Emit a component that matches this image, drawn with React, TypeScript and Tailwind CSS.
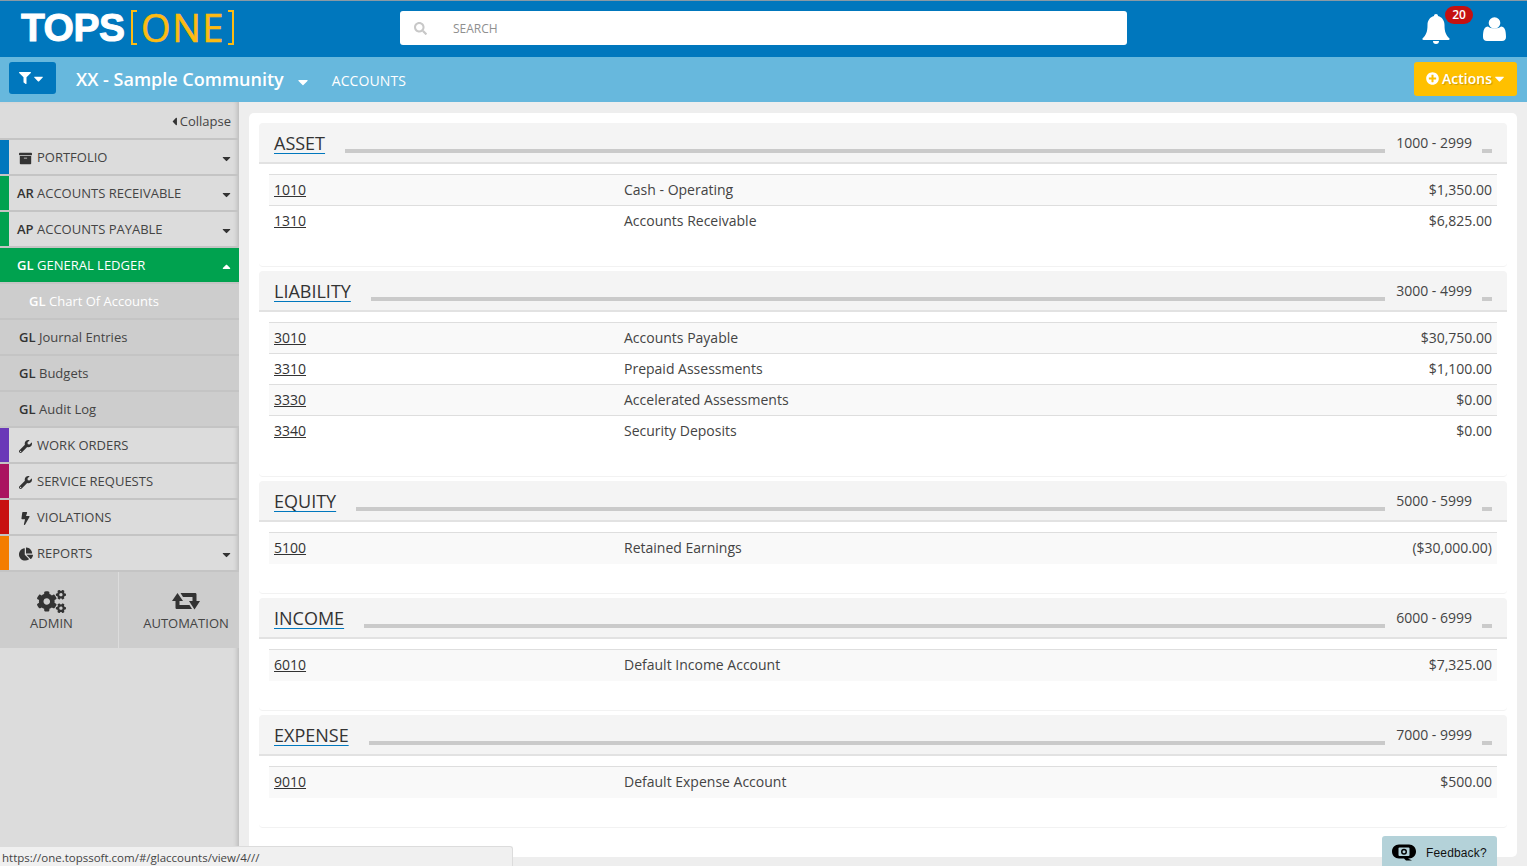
import { FaArchive, FaBolt, FaCaretDown, FaCaretLeft, FaCaretUp, FaChartPie, FaCogs, FaFilter, FaPlusCircle, FaSearch, FaWrench } from "react-icons/fa";

const SECTIONS = [
  {
    title: "ASSET",
    range: "1000 - 2999",
    rows: [
      ["1010", "Cash - Operating", "$1,350.00"],
      ["1310", "Accounts Receivable", "$6,825.00"],
    ],
  },
  {
    title: "LIABILITY",
    range: "3000 - 4999",
    rows: [
      ["3010", "Accounts Payable", "$30,750.00"],
      ["3310", "Prepaid Assessments", "$1,100.00"],
      ["3330", "Accelerated Assessments", "$0.00"],
      ["3340", "Security Deposits", "$0.00"],
    ],
  },
  {
    title: "EQUITY",
    range: "5000 - 5999",
    rows: [["5100", "Retained Earnings", "($30,000.00)"]],
  },
  {
    title: "INCOME",
    range: "6000 - 6999",
    rows: [["6010", "Default Income Account", "$7,325.00"]],
  },
  {
    title: "EXPENSE",
    range: "7000 - 9999",
    rows: [["9010", "Default Expense Account", "$500.00"]],
  },
];

function Logo() {
  return (
    <div className="flex items-center -mt-[3px]">
      <span className="font-['Liberation_Sans'] font-bold text-[39px] leading-[35px] tracking-[-0.5px] text-white [-webkit-text-stroke:1px_white]">
        TOPS
      </span>
      <div className="ml-[7px] h-[35px] w-[103px] flex items-center justify-between text-[#fdbb11]">
        <span className="w-[6px] h-full border-2 border-r-0 border-[#fdbb11]" />
        <span className="font-['Open_Sans'] text-[38px] leading-[35px] tracking-[1.5px] [-webkit-text-stroke:0.6px_#fdbb11]">ONE</span>
        <span className="w-[6px] h-full border-2 border-l-0 border-[#fdbb11]" />
      </div>
    </div>
  );
}

function BellIcon() {
  return (
    <svg width="28" height="30" viewBox="0 0 28 30" fill="#fff">
      <path d="M14 0c1.3 0 2 .9 2 2 4 1 6.5 4.5 6.5 9 0 7 1.5 10 5 13.5.3.5 0 1.5-1 1.5H1.500c-1 0-1.300-1-1-1.500C4 21 5.500 18 5.500 11 5.500 6.500 8 3 12 2c0-1.100.7-2 2-2z" />
      <path d="M11 27h6a3 3 0 0 1-6 0z" />
    </svg>
  );
}

function UserIcon() {
  return (
    <svg width="23" height="24" viewBox="0 0 23 24" fill="#fff">
      <circle cx="11.500" cy="6" r="5.800" />
      <path d="M0 20c0-7 1.500-10.500 5-10.500 2 2.500 11 2.500 13 0 3.500 0 5 3.500 5 10.500 0 2.500-1.500 4-4 4H4c-2.500 0-4-1.500-4-4z" />
    </svg>
  );
}

function RetweetIcon() {
  return (
    <svg width="28" height="18" viewBox="0 0 28 18" fill="#333">
      <path d="M0 9l5.500-8L11 9H7.500v4h10l2.500 4H5c-1 0-1.500-.5-1.500-1.500V9z" />
      <path d="M8.500 1H23c1 0 1.500.5 1.500 1.500V9H28l-5.500 8.500L17 9h3.500V5H11z" />
    </svg>
  );
}

function Header() {
  return (
    <header className="h-[57px] bg-[#0077bd] border-t border-[#8a9aa5] flex items-center relative">
      <div className="w-[400px] pl-[21px]">
        <Logo />
      </div>
      <div className="w-[727px] h-[34px] -mt-[3px] pt-[2px] bg-white rounded-[3px] flex items-center pl-[14px]">
        <FaSearch className="text-[#c8c8c8] text-[13px]" />
        <span className="ml-[26px] text-[12px] text-[#8f8f8f]">SEARCH</span>
      </div>
      <div className="ml-auto pr-[21px] flex items-center gap-[33px]">
        <BellIcon />
        <UserIcon />
      </div>
      <span className="absolute left-[1445px] top-[5px] w-[28px] h-[18px] rounded-full bg-[#c51111] text-white text-[12px] font-semibold leading-[18px] text-center">
        20
      </span>
    </header>
  );
}

function SubBar() {
  return (
    <div className="h-[45px] bg-[#67b8dd] flex items-center pl-[9px] pr-[10px] text-white">
      <button className="w-[47px] h-[32px] -mt-[3px] bg-[#0077bd] rounded-[3px] flex items-center justify-center text-white">
        <FaFilter className="text-[12px]" />
        <FaCaretDown className="text-[15px]" />
      </button>
      <span className="ml-[20px] text-[18px] font-semibold">XX - Sample Community</span>
      <FaCaretDown className="ml-[11px] mt-[4px] text-[16px]" />
      <span className="ml-[21px] mt-[2px] text-[14px] tracking-[0.1px]">ACCOUNTS</span>
      <button className="ml-auto w-[103px] h-[34px] -mt-[1px] pb-[2px] pl-[1px] bg-[#ffc000] rounded-[3px] flex items-center justify-center text-[14px] font-semibold text-white [text-shadow:1px_1px_1px_rgba(0,0,0,0.2)]">
        <FaPlusCircle className="text-[13px] mr-[3px] ml-[1px]" />
        Actions
        <FaCaretDown className="text-[15px]" />
      </button>
    </div>
  );
}

function NavItem({ stripe, icon, label, caret }: { stripe: string; icon: React.ReactNode; label: string; caret?: boolean }) {
  return (
    <div className="h-[36px] border-b-2 border-[#c4c4c4] flex items-center text-[13px] text-[#444]">
      <span className={`w-[9px] h-[34px] ${stripe}`} />
      <div className="flex-1 flex items-center mt-[2px]">
        <span className="w-[28px] flex justify-center pl-[5px] text-[#333] shrink-0">{icon}</span>
        <span>{label}</span>
        {caret && <FaCaretDown className="ml-auto mr-[6px] text-[13px] text-[#333]" />}
      </div>
    </div>
  );
}

function PrefixItem({ stripe, prefix, label }: { stripe: string; prefix: string; label: string }) {
  return (
    <div className="h-[36px] border-b-2 border-[#c4c4c4] flex items-center text-[13px] text-[#444]">
      <span className={`w-[9px] h-[34px] ${stripe}`} />
      <div className="flex-1 flex items-center mt-[2px]">
        <span className="ml-[8px] font-semibold text-[#333] w-[20px]">{prefix}</span>
        <span>{label}</span>
        <FaCaretDown className="ml-auto mr-[6px] text-[13px] text-[#333]" />
      </div>
    </div>
  );
}

function SubItem({ label, active }: { label: string; active?: boolean }) {
  return (
    <div className={`h-[36px] pt-[2px] border-b-2 border-[#c4c4c4] bg-[#cdcdcd] flex items-center text-[13px] ${active ? "pl-[29px] text-white" : "pl-[19px] text-[#444]"}`}>
      <span className={`font-semibold w-[20px] ${active ? "text-white" : "text-[#333]"}`}>GL</span>
      <span>{label}</span>
    </div>
  );
}

function Sidebar() {
  return (
    <aside className="w-[239px] shrink-0 bg-[#dcdcdc] shadow-[inset_-4px_0_4px_-2px_rgba(0,0,0,0.15)] flex flex-col">
      <div className="h-[38px] border-b-2 border-[#c4c4c4] flex items-center justify-end pr-[8px] pt-[3px] text-[13px] text-[#444]">
        <FaCaretLeft className="text-[13px] text-[#333] -mr-[1px]" />
        Collapse
      </div>
      <NavItem stripe="bg-[#0077bd]" icon={<FaArchive className="text-[13px]" />} label="PORTFOLIO" caret />
      <PrefixItem stripe="bg-[#00a24f]" prefix="AR" label="ACCOUNTS RECEIVABLE" />
      <PrefixItem stripe="bg-[#00a24f]" prefix="AP" label="ACCOUNTS PAYABLE" />
      <div className="h-[36px] pt-[2px] border-b-2 border-[#c4c4c4] bg-[#00a24f] flex items-center pl-[17px] text-[13px] text-white font-medium">
        <span className="font-semibold w-[20px]">GL</span>
        <span>GENERAL LEDGER</span>
        <FaCaretUp className="ml-auto mr-[6px] text-[13px]" />
      </div>
      <SubItem label="Chart Of Accounts" active />
      <SubItem label="Journal Entries" />
      <SubItem label="Budgets" />
      <SubItem label="Audit Log" />
      <NavItem stripe="bg-[#6a38b8]" icon={<FaWrench className="text-[13px]" />} label="WORK ORDERS" />
      <NavItem stripe="bg-[#aa1460]" icon={<FaWrench className="text-[13px]" />} label="SERVICE REQUESTS" />
      <NavItem stripe="bg-[#c81010]" icon={<FaBolt className="text-[13px]" />} label="VIOLATIONS" />
      <NavItem stripe="bg-[#f47d00]" icon={<FaChartPie className="text-[14px]" />} label="REPORTS" caret />
      <div className="flex h-[76px] bg-[#cdcdcd] text-[13px] text-[#444]">
        <div className="w-[119px] border-r border-[#dcdcdc] flex flex-col items-center pt-[15px] pr-[15px]">
          <FaCogs className="text-[29px] text-[#333]" />
          <span className="-mt-[2px]">ADMIN</span>
        </div>
        <div className="flex-1 flex flex-col items-center pt-[20px] pl-[14px]">
          <RetweetIcon />
          <span className="mt-[4px]">AUTOMATION</span>
        </div>
      </div>
    </aside>
  );
}

function Section({ title, range, rows }: { title: string; range: string; rows: string[][] }) {
  return (
    <section className="mb-[4px] pb-[29px] border-b border-[#f2f2f2] rounded-[4px]">
      <div className="h-[41px] pt-[2px] bg-[#f4f4f4] border-b-2 border-[#e2e2e2] rounded-t-[4px] flex items-center px-[15px]">
        <a className="text-[18px] text-[#333] underline decoration-[#0077bd] underline-offset-[3px]">{title}</a>
        <span className="flex-1 h-[4px] mt-[15px] ml-[20px] bg-[#cacaca]" />
        <span className="ml-[11px] -mt-[2px] text-[14px] text-[#444]">{range}</span>
        <span className="w-[10px] h-[4px] mt-[15px] ml-[10px] bg-[#cacaca]" />
      </div>
      <div className="mx-[10px] mt-[10px] border-t border-[#dedede]">
        {rows.map((row, i) => (
          <div
            key={row[0]}
            className={`h-[31px] pb-[2px] flex items-center px-[5px] text-[14px] text-[#444] ${i % 2 === 0 ? "bg-[#f9f9f9]" : "bg-white"} ${i < rows.length - 1 ? "border-b border-[#dedede]" : ""}`}
          >
            <a className="w-[350px] underline text-[#333]">{row[0]}</a>
            <span>{row[1]}</span>
            <span className="ml-auto">{row[2]}</span>
          </div>
        ))}
      </div>
    </section>
  );
}

function FeedbackIcon() {
  return (
    <svg width="24" height="17" viewBox="0 0 24 17">
      <path d="M7 0.500h10c4 0 7 3 7 7s-3 7-7 7h-1l4 2h-6l-2-2H7c-4 0-7-3-7-7s3-7 7-7z" fill="#000" />
      <rect x="6.500" y="3.500" width="11" height="8.500" rx="1" fill="#b4d2d9" />
      <circle cx="12" cy="7.700" r="3" fill="#000" />
      <circle cx="12" cy="7.700" r="1.500" fill="#b4d2d9" />
    </svg>
  );
}

export default function App() {
  return (
    <div className="relative w-full h-[866px] overflow-hidden flex flex-col font-['Open_Sans',sans-serif]">
      <Header />
      <SubBar />
      <div className="flex-1 flex min-h-0 bg-[#dcdcdc]">
        <Sidebar />
        <main className="flex-1 bg-[#eeeeee] px-[10px] pt-[11px]">
          <div className="h-[744px] bg-white rounded-[5px] p-[10px]">
            {SECTIONS.map((s) => (
              <Section key={s.title} title={s.title} range={s.range} rows={s.rows} />
            ))}
          </div>
        </main>
      </div>
      <div className="absolute left-0 bottom-0 w-[513px] h-[20px] bg-[#f0f0f0] border-t border-r border-[#dcdcdc] rounded-tr-[3px] pl-[2px] pt-[1px] text-[11.5px] leading-[20px] text-[#444]">
        https://one.topssoft.com/#/glaccounts/view/4///
      </div>
      <div className="absolute left-[1382px] bottom-0 w-[115px] h-[30px] pt-[3px] bg-[#b4d2d9] rounded-t-[3px] flex items-center pl-[10px] font-['Liberation_Sans'] text-[12px] text-[#111]">
        <FeedbackIcon />
        <span className="ml-[10px] tracking-[0.15px]">Feedback?</span>
      </div>
    </div>
  );
}
